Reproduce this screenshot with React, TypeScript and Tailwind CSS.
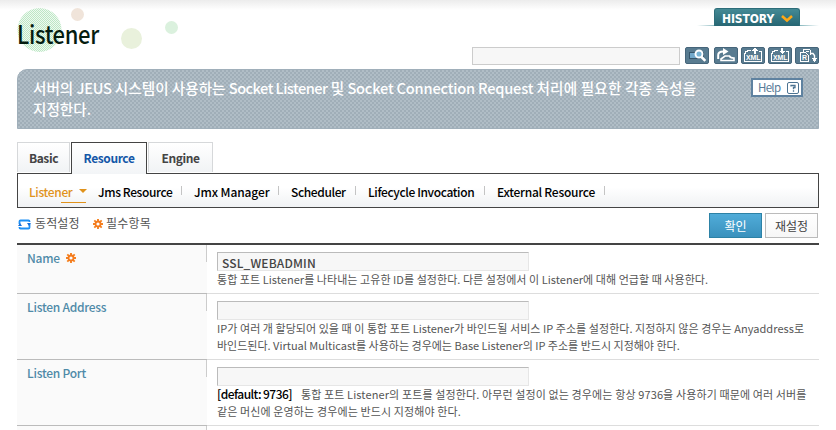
import React from "react";

type IconProps = { children: React.ReactNode; className?: string };

const ToolIcon = ({ children, className = "" }: IconProps) => (
  <button className={`h-[17px] w-6 shrink-0 rounded-[2px] border border-[#46657a] bg-[#587b90] ${className}`}>
    <svg viewBox="0 0 22 15" className="block h-[15px] w-[22px]" fill="none" stroke="#fff" shapeRendering="crispEdges">
      {children}
    </svg>
  </button>
);

const Gear = ({ className = "" }: { className?: string }) => (
  <svg viewBox="0 0 10 10" className={`block h-[10px] w-[10px] shrink-0 ${className}`} fill="none">
    <path d="M5 0v3M5 7v3M0 5h3M7 5h3M1.3 1.3l2 2M6.7 6.7l2 2M8.7 1.3l-2 2M3.3 6.7l-2 2" stroke="#f58220" strokeWidth="1.9" />
    <circle cx="5" cy="5" r="2.5" stroke="#f47a1c" strokeWidth="1.8" />
  </svg>
);

const XmlIcon = ({ down = false }: { down?: boolean }) => (
  <>
    <path d="M2.500 7V5.500h1V3.500h2v-1h3M2.500 7v5.500M2 13.500h18M19.500 13V3.500h-2v-1" />
    <text
      x="4"
      y="12.300"
      textLength="14.500"
      lengthAdjust="spacingAndGlyphs"
      className="fill-white stroke-none font-['Liberation_Sans',sans-serif] text-[7px] font-bold"
    >
      XML
    </text>
    {down ? (
      <path d="M12 0h2v2.500h2.500L13 6 9.500 2.500H12z" fill="#fff" stroke="none" />
    ) : (
      <path d="M13 0l3.500 3H14v3h-2V3H9.500z" fill="#fff" stroke="none" />
    )}
  </>
);

const Field = ({ value = "" }: { value?: string }) => (
  <div className="h-[19px] w-[312px] border border-t-[#bbb] border-r-[#e6e6e6] border-b-[#e6e6e6] border-l-[#bbb] bg-[#f7f7f7] pl-[4px] text-[12px] leading-[19px] font-medium tracking-[0.15px] text-[#444]">
    {value}
  </div>
);

type RowProps = { label: string; required?: boolean; height: string; children: React.ReactNode };

const Row = ({ label, required, height, children }: RowProps) => (
  <div className={`flex ${height}`}>
    <div className="relative w-[190px] shrink-0 border-b border-[#bbb] bg-[#fafafa] pt-[4px] pl-[10px]">
      <div className="flex items-center gap-[6px] text-[12px] leading-[18px] font-medium tracking-[-0.25px] text-[#4f8aa8]">
        {label}
        {required && <Gear />}
      </div>
      <span className="absolute top-0 right-0 h-[17px] w-px bg-[#ccc]" />
    </div>
    <div className="flex-1 border-b border-[#ddd] pt-[7px] pl-[10px]">{children}</div>
  </div>
);

const Sep = ({ className }: { className: string }) => <span className={`h-[9px] w-px shrink-0 bg-[#c4c4c4] ${className}`} />;

const Item = ({ width, children }: { width: string; children: string }) => (
  <span className={`shrink-0 ${width}`}>{children}</span>
);

export default function App() {
  return (
    <div className="relative h-[430px] w-[836px] overflow-hidden bg-white font-['Noto_Sans_CJK_KR',sans-serif] whitespace-nowrap">
      <div className="absolute inset-x-0 top-0 h-[10px] bg-linear-to-b from-[#ececec] to-white" />
      <svg className="absolute top-0 left-0 h-[60px] w-[200px]">
        <defs>
          <pattern id="mesh" width="2" height="2" patternUnits="userSpaceOnUse">
            <rect width="2" height="2" fill="#eefaf0" />
            <rect width="1" height="1" fill="#bde6c5" />
            <rect x="1" y="1" width="1" height="1" fill="#bde6c5" />
          </pattern>
        </defs>
        <circle cx="39.5" cy="30" r="22" fill="url(#mesh)" />
        <circle cx="77.5" cy="14.5" r="6.5" fill="#f0e4da" />
        <circle cx="131.5" cy="38.5" r="10.5" fill="#e9f1dc" />
        <circle cx="171.5" cy="27.5" r="6.5" fill="#dbf1de" />
      </svg>

      <header className="relative flex h-[69px] justify-between pr-[17px] pl-[17px]">
        <h1 className="origin-left scale-x-[0.88] pt-[16px] text-[25px] leading-[34px] font-medium tracking-[-0.4px] text-[#051c10]">
          Listener
        </h1>
        <div className="flex flex-col items-end">
          <div className="mt-2 flex h-[18px] w-[122px] bg-[linear-gradient(90deg,#fff,#65a3ab_20%,#65a3ab_80%,#fff)] bg-[length:100%_1px] bg-bottom bg-no-repeat pl-[17px]">
            <div className="flex h-[18px] w-[86px] items-center rounded-t-[3px] border border-b-0 border-[#2d6d79] bg-linear-to-b from-[#448a95] to-[#266673] pl-[7px]">
              <span className="w-[59px] pt-[2px] font-['DejaVu_Sans_Condensed','DejaVu_Sans',sans-serif] text-[12px] leading-[16px] font-bold tracking-[-0.1px] text-white">
                HISTORY
              </span>
              <svg viewBox="0 0 12 8" className="mt-[2px] h-2 w-3" fill="none">
                <path d="M1 1l5 4.500L11 1" stroke="#ffa816" strokeWidth="2.600" />
              </svg>
            </div>
          </div>
          <div className="mt-[21px] flex h-[18px] items-start">
            <div className="mr-[5px] h-[18px] w-[208px] border border-[#ccc] bg-[#f7f7f7]" />
            <ToolIcon className="mr-[5px]">
              <rect x="3.500" y="4.500" width="14" height="6" fill="#73a9cb" stroke="#36556a" />
              <circle cx="13" cy="6" r="3.500" fill="#79b4d5" strokeWidth="1.900" shapeRendering="auto" />
              <path d="M15.500 9l3.800 3.800" strokeWidth="2.600" shapeRendering="auto" />
            </ToolIcon>
            <ToolIcon className="mr-[3px]">
              <g shapeRendering="auto">
                <path d="M3.200 11V7q0-3.500 5-3.500h1" strokeWidth="2" />
                <path d="M8 0l5.500 3.500L8 7z" fill="#fff" stroke="none" />
                <path d="M6 12.500V11l4-3h4.500q.5 2 4.500 2v2.500z" strokeWidth="1.600" />
              </g>
            </ToolIcon>
            <ToolIcon className="mr-[3px]"><XmlIcon /></ToolIcon>
            <ToolIcon className="mr-[3px]"><XmlIcon down /></ToolIcon>
            <ToolIcon>
              <path d="M7.500 4.500v-3h6l1 1v4M4.500 13.500v-9h5l3 3v6z" />
              <text x="6" y="12" className="fill-white stroke-none font-['Liberation_Sans',sans-serif] text-[7px] font-bold">R</text>
              <path d="M10 3.500h2.500" />
              <path d="M15 5.500h2l1.500 2v3" shapeRendering="auto" strokeWidth="1.400" />
              <path d="M15.500 10h6l-3 4z" fill="#fff" stroke="none" />
            </ToolIcon>
          </div>
        </div>
      </header>

      <main className="mx-[17px]">
        <section className="flex h-[60px] items-start justify-between rounded-tl-[10px] border border-[#a0afba] bg-[#b0bdc6] bg-[conic-gradient(#a0aeb8_25%,#b0bdc6_0_50%,#a0aeb8_0_75%,#b0bdc6_0)] bg-[length:4px_4px] pt-[7px] pr-[15px] pl-[15px]">
          <p className="text-[14.6px] leading-[21px] font-medium text-white">
            서버의 <span className="tracking-[-0.3px]">JEUS</span> 시스템이 사용하는{" "}
            <span className="tracking-[-0.55px]">Socket Listener</span> 및{" "}
            <span className="tracking-[-0.2px]">Socket Connection Request</span>{" "}
            <span className="tracking-[0.16px]">처리에 필요한 각종 속성을</span>
            <br />
            지정한다.
          </p>
          <button className="mt-px flex h-[19px] w-[52px] shrink-0 items-center justify-between border-2 border-[#5f82a0] bg-white pr-[2px] pl-[5px] text-[11.5px] leading-[15px] tracking-[-0.7px] text-[#587b98]">
            Help
            <svg viewBox="0 0 12 12" className="h-3 w-3 shrink-0" fill="none" stroke="#4d7391">
              <rect x=".5" y=".5" width="11" height="11" rx="1.500" />
              <path d="M4 4.500V3.500h4V5.500H6.500v1.800M6.500 8.300v1.400" strokeWidth="1.300" />
            </svg>
          </button>
        </section>

        <nav className="mt-[13px]">
          <div className="flex h-[31px] items-start gap-px text-[12px] font-bold tracking-[-0.4px] text-[#444]">
            <div className="h-[30px] w-[53px] border border-b-0 border-[#d6d8da] bg-linear-to-b from-white to-[#f1f3f5] text-center leading-[29px]">Basic</div>
            <div className="relative z-10 h-[32px] w-[76px] border border-b-0 border-[#444] bg-linear-to-b from-white to-[#f3f5f7] text-center leading-[29px] text-[#1457a8]">Resource</div>
            <div className="h-[30px] w-[65px] border border-b-0 border-[#d6d8da] bg-linear-to-b from-white to-[#f1f3f5] text-center leading-[29px]">Engine</div>
          </div>
          <div className="flex h-[35px] items-center border border-[#444] bg-linear-to-b from-white from-40% to-[#f0f2f4] pl-[11px] text-[12px] leading-[33px] font-medium tracking-[-0.38px] text-black">
            <div className="relative w-[69px] pt-px tracking-[-0.35px] text-[#e0921b]">
              Listener
              <span className="absolute top-[15px] left-[50px] border-x-[4px] border-t-[4px] border-x-transparent border-t-[#e0921b]" />
              <span className="absolute top-[28px] left-[32px] h-px w-[25px] bg-[#e0921b]" />
            </div>
            <Item width="w-[74px] pt-px">Jms Resource</Item>
            <Sep className="mr-[12px] ml-[9px]" />
            <Item width="w-[75px] pt-px tracking-[-0.1px]">Jmx Manager</Item>
            <Sep className="mr-[12px] ml-[9px]" />
            <Item width="w-[55px] pt-px">Scheduler</Item>
            <Sep className="mr-[12px] ml-[9px]" />
            <Item width="w-[107px] pt-px">Lifecycle Invocation</Item>
            <Sep className="mr-[12px] ml-[9px]" />
            <Item width="w-[99px] pt-px tracking-[-0.25px]">External Resource</Item>
            <Sep className="ml-[8px]" />
          </div>
        </nav>

        <div className="flex h-[35px] items-start text-[12px] text-[#555]">
          <svg viewBox="0 0 13 11" className="mt-[11px] ml-[1px] h-[11px] w-[13px]" fill="none" strokeWidth="1.800">
            <path d="M1.500 5V2.500q0-1 1-1H8M5 9.500h5.500q1 0 1-1V5" stroke="#1c90f5" />
            <path d="M8 1.500h2.500q1 0 1 1V3M5 9.500H2.500q-1 0-1-1V8" stroke="#1c90f5" />
            <path d="M9 4h4l-2 3zM0 7l2-3 2 3z" fill="#166dd8" />
          </svg>
          <span className="ml-[4px] w-[58px] pt-[6px] leading-[18px] tracking-[0.1px]">동적설정</span>
          <Gear className="mt-[11px] mr-[3px]" />
          <span className="pt-[6px] leading-[18px] tracking-[0.2px]">필수항목</span>
          <div className="mt-[5px] mr-px ml-auto flex gap-[3px] text-center leading-[22px]">
            <button className="h-[25px] w-[53px] border border-[#2d82a6] bg-linear-to-b from-[#50acd9] to-[#3a91bd] text-white">확인</button>
            <button className="h-[25px] w-[53px] border border-[#bbb] bg-linear-to-b from-white to-[#f7f7f7] text-[#444]">재설정</button>
          </div>
        </div>

        <section className="border-t-2 border-[#444] text-[11px] leading-[17px] text-[#555]">
          <Row label="Name" required height="h-[49px]">
            <Field value="SSL_WEBADMIN" />
            <p className="tracking-[0.05px]">통합 포트 Listener를 나타내는 고유한 ID를 설정한다. 다른 설정에서 이 Listener에 대해 언급할 때 사용한다.</p>
          </Row>
          <Row label="Listen Address" height="h-[66px]">
            <Field />
            <p>
              <span className="tracking-[0.05px]">IP가 여러 개 할당되어 있을 때 이 통합 포트 Listener가 바인드될 서비스 IP 주소를 설정한다. 지정하지 않은 경우는 Anyaddress로</span>
              <br />
              바인드된다. Virtual Multicast를 사용하는 경우에는 Base Listener의 IP 주소를 반드시 지정해야 한다.
            </p>
          </Row>
          <Row label="Listen Port" height="h-[66px]">
            <Field />
            <p className="tracking-[0.12px]">
              <span className="mr-[9px] text-[12px] leading-[16px] font-medium tracking-[-0.55px] text-black">[default: 9736]</span>
              통합 포트 Listener의 포트를 설정한다. 아무런 설정이 없는 경우에는 항상 9736을 사용하기 때문에 여러 서버를
              <br />
              같은 머신에 운영하는 경우에는 반드시 지정해야 한다.
            </p>
          </Row>
          <Row label="" height="h-[66px]">{null}</Row>
        </section>
      </main>
    </div>
  );
}
